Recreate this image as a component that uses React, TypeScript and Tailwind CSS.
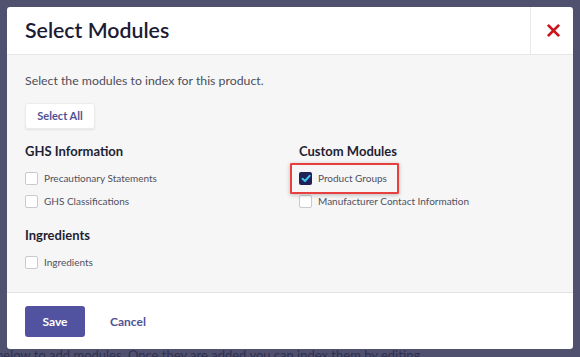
import React from "react";

function Box({ checked = false }: { checked?: boolean }) {
  if (checked) {
    return (
      <span className="flex h-[13px] w-[13px] shrink-0 items-center justify-center rounded-[2px] bg-[#1e2257]">
        <svg width="10" height="9" viewBox="0 0 10 9">
          <path d="M1.5 4.8 L4 7 L8.6 1.8" fill="none" stroke="#3cc6f2" strokeWidth="2" strokeLinecap="round" strokeLinejoin="round" />
        </svg>
      </span>
    );
  }
  return <span className="block h-[13px] w-[13px] shrink-0 rounded-[2px] border border-[#c9c9cf] bg-white" />;
}

function Row({ label, checked }: { label: string; checked?: boolean }) {
  return (
    <div className="flex h-[23px] items-center gap-[6px]">
      <Box checked={checked} />
      <span className="text-[10px] text-[#50505f]">{label}</span>
    </div>
  );
}

export default function App() {
  return (
    <div
      className="relative h-[357px] w-[580px] overflow-hidden bg-[#50516f] pl-[7px] pt-[7px]"
      style={{ fontFamily: "Lato, 'Open Sans', sans-serif" }}
    >
      <div className="absolute left-[-4px] top-[346px] whitespace-nowrap text-[13px] text-[#2f3050]">
        below to add modules. Once they are added you can index them by editing
      </div>
      <div className="relative flex h-[342px] w-[566px] flex-col overflow-hidden rounded-[3px] bg-white">
        <div className="flex h-[48px] border-b border-[#e6e6e6]">
          <div className="flex flex-1 items-center pl-[18px] text-[21.3px] font-semibold text-[#1b1b35]">Select Modules</div>
          <div className="flex w-[43px] items-center justify-center border-l border-[#e8e8e8] pl-[2px]">
            <svg width="15" height="15" viewBox="0 0 16 16">
              <path d="M2 2 L14 14 M14 2 L2 14" stroke="#c8161e" strokeWidth="3" strokeLinecap="butt" />
            </svg>
          </div>
        </div>
        <div className="flex h-[238px] flex-col border-b border-[#e3e3e3] bg-[#f6f6f6] px-[18px] pt-[17px]">
          <div className="text-[12.3px] leading-[18px] text-[#4d4d5a]">Select the modules to index for this product.</div>
          <div className="mt-[13px] flex h-[26px] w-[70px] items-center justify-center rounded-[3px] border border-[#ececec] bg-white text-[11px] font-bold text-[#4e5194] shadow-[0_1px_2px_rgba(0,0,0,0.08)]">
            Select All
          </div>
          <div className="mt-[13px] flex">
            <div className="w-[274px]">
              <div className="mb-[7px] text-[13px] font-bold leading-[18px] text-[#1f1f33]">GHS Information</div>
              <Row label="Precautionary Statements" />
              <Row label="GHS Classifications" />
              <div className="mb-[7px] mt-[13px] text-[13px] font-bold leading-[18px] text-[#1f1f33]">Ingredients</div>
              <Row label="Ingredients" />
            </div>
            <div className="flex-1">
              <div className="mb-[7px] text-[13px] font-bold leading-[18px] text-[#1f1f33]">Custom Modules</div>
              <div className="relative">
                <div className="absolute left-[-9px] top-[-4px] h-[31px] w-[109px] rounded-[1px] border-2 border-[#e8403f] shadow-[0_1px_4px_rgba(0,0,0,0.25)]" />
                <Row label="Product Groups" checked />
              </div>
              <Row label="Manufacturer Contact Information" />
            </div>
          </div>
        </div>
        <div className="flex flex-1 items-start gap-[25px] px-[18px] pt-[13px]">
          <div className="flex h-[31px] w-[60px] items-center justify-center rounded-[3px] bg-[#5153a1] text-[12px] font-bold text-white">Save</div>
          <div className="flex h-[31px] items-center text-[12px] font-bold text-[#505294]">Cancel</div>
        </div>
      </div>
    </div>
  );
}
